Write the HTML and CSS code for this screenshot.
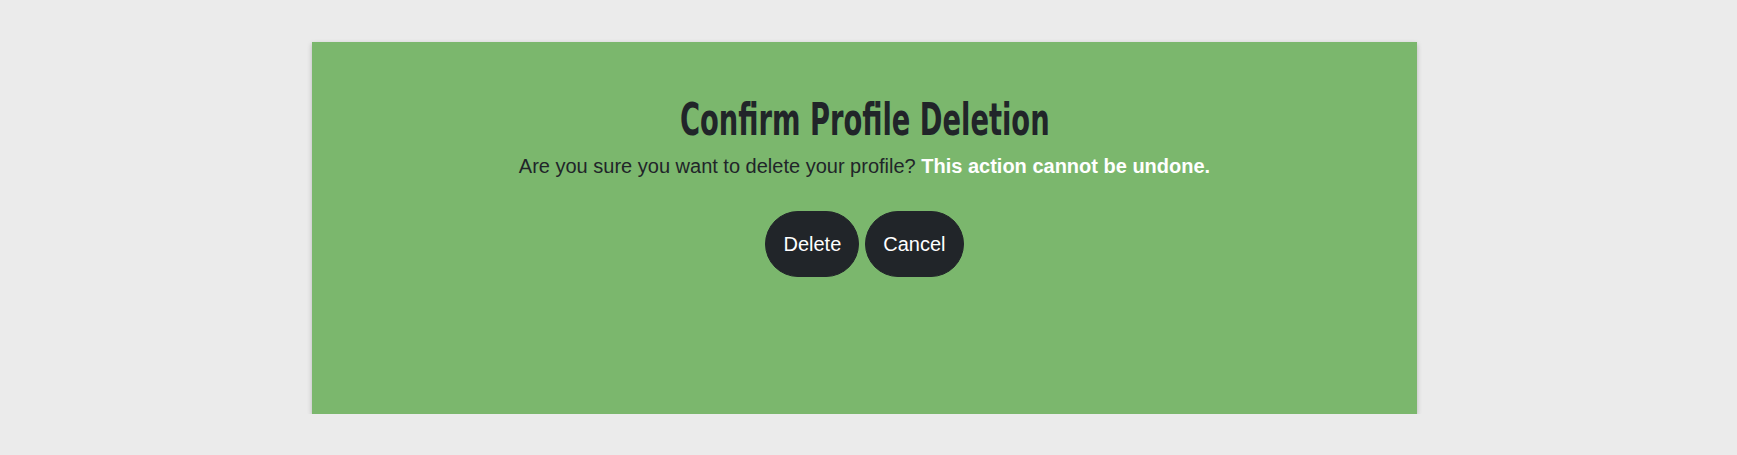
FILE: index.html
```html
<!DOCTYPE html>
<html lang="en">
<head>
<meta charset="utf-8">
<title>Confirm Profile Deletion</title>
<link rel="stylesheet" href="styles.css">
</head>
<body>
<main class="page">
  <section class="card">
    <h1 class="title">Confirm Profile Deletion</h1>
    <p class="message">Are you sure you want to delete your profile? <strong class="warn">This action cannot be undone.</strong></p>
    <div class="actions">
      <button class="btn" type="button">Delete</button>
      <button class="btn" type="button">Cancel</button>
    </div>
  </section>
</main>
</body>
</html>
```
FILE: styles.css
```css
html, body {
  margin: 0;
  padding: 0;
  background: #ebebeb;
  font-family: "Liberation Sans", Arial, sans-serif;
  color: #212529;
}
.page {
  padding-top: 42px;
  padding-left: 312px;
}
.card {
  box-sizing: border-box;
  width: 1105px;
  height: 372px;
  background: #7bb76d;
  box-shadow: 0 2px 5px rgba(0, 0, 0, 0.22);
  display: flex;
  flex-direction: column;
  align-items: center;
  padding-top: 52px;
}
.title {
  margin: 0;
  font-family: "Liberation Sans Narrow", "DejaVu Sans Condensed", sans-serif;
  font-stretch: condensed;
  font-weight: 700;
  font-size: 44px;
  line-height: 1.2;
  color: #212529;
  transform: scaleX(0.69);
  white-space: nowrap;
}
.message {
  margin: 4px 0 0;
  font-size: 20px;
  line-height: 1.5;
}
.warn {
  color: #ffffff;
  font-weight: 700;
}
.actions {
  display: flex;
  gap: 6px;
  margin-top: 30px;
}
.btn {
  font-family: "Liberation Sans", Arial, sans-serif;
  font-size: 20px;
  line-height: 1.5;
  color: #ffffff;
  background: #212529;
  border: 1px solid #212529;
  border-radius: 34px;
  padding: 17px 17px;
  cursor: pointer;
}
```
